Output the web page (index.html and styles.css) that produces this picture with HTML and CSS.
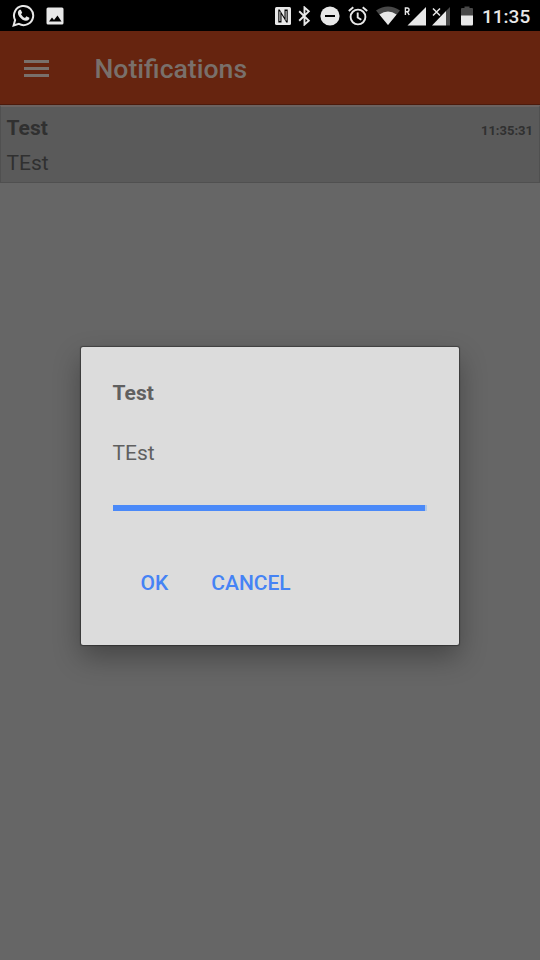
FILE: index.html
```
<!DOCTYPE html>
<html lang="en">
<head>
<meta charset="utf-8">
<title>Notifications</title>
<link rel="stylesheet" href="styles.css">
</head>
<body>
<div class="screen">
  <div class="status">
    <div class="status-left">
      <svg width="23" height="23" viewBox="0 0 23 23"><path d="M1.6 21.5 3.1 16A9.6 9.6 0 1 1 6.9 19.900Z" fill="none" stroke="#e8e8e8" stroke-width="2"/><path d="M7.500 5.700h1.300l1.400 3-1.200 1.600q1.500 2.700 4 3.600l1.400-1.600 3 1.500q.1 2.600-3.400 3-3.500-.2-6.800-4.400Q4.400 8.100 7.500 5.700Z" fill="#e8e8e8"/></svg>
      <svg width="18" height="18" viewBox="0 0 18 18"><rect x=".5" y=".5" width="17" height="17" rx="1.500" fill="#e8e8e8"/><path d="M3 14.500 6 10.500l2 2.500 3.500-4.500 4 6Z" fill="#000"/></svg>
    </div>
    <div class="status-right">
      <svg class="nfc" width="16" height="18" viewBox="0 0 16 18"><rect width="16" height="18" rx="1.500" fill="#e8e8e8"/><path d="M3.300 2.500V15.500H6.500V7.500L11.300 15.500H12.700V2.500H9.500V10.500L4.700 2.500Z" fill="#000"/><path d="M4.900 4.500V14M11.100 4V13.500" stroke="#e8e8e8" stroke-width="1"/></svg>
      <svg class="bt" width="13" height="20" viewBox="0 0 13 20"><path d="M1.200 5.200 10.800 14.600 6.500 18.500V1.500L10.800 5.400 1.200 14.800" fill="none" stroke="#e8e8e8" stroke-width="1.900"/></svg>
      <svg class="dnd" width="20" height="20" viewBox="0 0 20 20"><circle cx="10" cy="10" r="9.600" fill="#e8e8e8"/><path d="M5 10h10" stroke="#000" stroke-width="2"/></svg>
      <svg class="alarm" width="20" height="20" viewBox="0 0 20 20"><g fill="none" stroke="#e8e8e8" stroke-width="1.900"><circle cx="10" cy="11" r="7.400"/><path d="M.8 5 5.300 1.200M19.200 5 14.700 1.200M9.700 6.500v5l3.600 2.200"/></g></svg>
      <svg class="wifi" width="24" height="19" viewBox="0 0 24 19"><path d="M0 4.500Q12-3.500 24 4.500L12 19Z" fill="#484848"/><path d="M3.400 8.500Q12 2.500 20.600 8.500L12 19Z" fill="#e8e8e8"/></svg>
      <svg class="sig1" width="22" height="20" viewBox="0 0 22 20"><path d="M22 1V19.500H3.500Z" fill="#e8e8e8"/><path d="M1.400 9V2h1.800a1.800 1.800 0 0 1 0 3.700H1.400M3.300 5.700 5.200 9" fill="none" stroke="#e8e8e8" stroke-width="1.400"/></svg>
      <svg class="sig2" width="18" height="20" viewBox="0 0 18 20"><path d="M18 1V19.500H14V5Z" fill="#484848"/><path d="M14 5V19.500H0Z" fill="#e8e8e8"/><path d="M1 2.500 8 9.500M8 2.500 1 9.500" stroke="#000" stroke-width="3.400"/><path d="M1 2.500 8 9.500M8 2.500 1 9.500" stroke="#e8e8e8" stroke-width="1.500"/></svg>
      <svg class="bat" width="12" height="20" viewBox="0 0 12 20"><path d="M0 3Q0 2 1 2H3.500V.5H8.500V2H11Q12 2 12 3V10H0Z" fill="#484848"/><path d="M0 9.500H12V18Q12 19.500 11 19.500H1Q0 19.500 0 18Z" fill="#e8e8e8"/></svg>
      <span class="clock">11:35</span>
    </div>
  </div>
  <header class="bar">
    <div class="menu"><i></i><i></i><i></i></div>
    <h1>Notifications</h1>
  </header>
  <article class="item">
    <div class="item-head"><strong>Test</strong><time>11:35:31</time></div>
    <p>TEst</p>
  </article>
  <div class="dialog" role="dialog">
    <h2>Test</h2>
    <p>TEst</p>
    <div class="progress"><div class="fill"></div></div>
    <div class="actions"><button>OK</button><button>CANCEL</button></div>
  </div>
</div>
</body>
</html>
```

FILE: styles.css
```
* { box-sizing: border-box; margin: 0; padding: 0; }
body { font-family: Roboto, sans-serif; }
svg { display: block; flex: none; }
.screen { position: relative; width: 540px; height: 960px; background: #666; overflow: hidden; }
.status { height: 31px; background: #000; display: flex; justify-content: space-between; padding: 0 10px 0 12px; }
.status-left, .status-right { display: flex; align-items: center; }
.status-left { gap: 11px; }
.bt { margin-left: 7px; }
.dnd { margin-left: 9px; }
.alarm { margin-left: 8px; }
.wifi { margin-left: 8px; }
.sig1 { margin-left: 4px; }
.sig2 { margin-left: 6px; }
.bat { margin-left: 11px; }
.clock { margin-left: 9px; width: 48px; font-size: 19px; font-weight: 500; line-height: 22px; color: #e8e8e8; white-space: nowrap; padding-top: 2px; }
.bar { height: 74px; background: #66240f; border-bottom: 1px solid #4c1a0b; display: flex; align-items: center; padding: 3px 0 0 24px; }
.menu { width: 25px; display: flex; flex-direction: column; gap: 4px; margin-bottom: 2px; }
.menu i { height: 3px; background: #79706b; }
.bar h1 { margin-left: 45.5px; font-size: 26.6px; font-weight: 500; line-height: 32px; color: #79706b; }
.item { height: 78px; background: #5a5a5a; border: 1px solid #505050; border-top: 2px solid #6b6260; padding: 8px 6px 0 5.5px; color: #303030; }
.item-head { display: flex; justify-content: space-between; align-items: baseline; line-height: 26px; }
.item-head strong { font-size: 21px; font-weight: 700; }
.item-head time { font-size: 13px; font-weight: 700; }
.item p { font-size: 21px; line-height: 26px; margin-top: 6px; }
.dialog { position: absolute; left: 81px; top: 347px; width: 378px; height: 298px; background: #dcdcdc; border-radius: 2px; padding: 33px 32px 0 31.5px; color: #606060; box-shadow: 0 0 1px 1px rgba(0,0,0,.35), 0 12px 28px rgba(0,0,0,.32); }
.dialog h2 { font-size: 21px; font-weight: 700; line-height: 26px; }
.dialog p { font-size: 21px; line-height: 26px; margin-top: 34px; }
.progress { height: 6px; margin-top: 39px; background: #b2c8e5; }
.fill { width: 312px; height: 6px; background: #4a89f8; }
.actions { display: flex; gap: 43px; margin: 59px 0 0 28px; }
.actions button { border: 0; background: none; font: 500 21px/26px Roboto, sans-serif; color: #4583f5; }
```
